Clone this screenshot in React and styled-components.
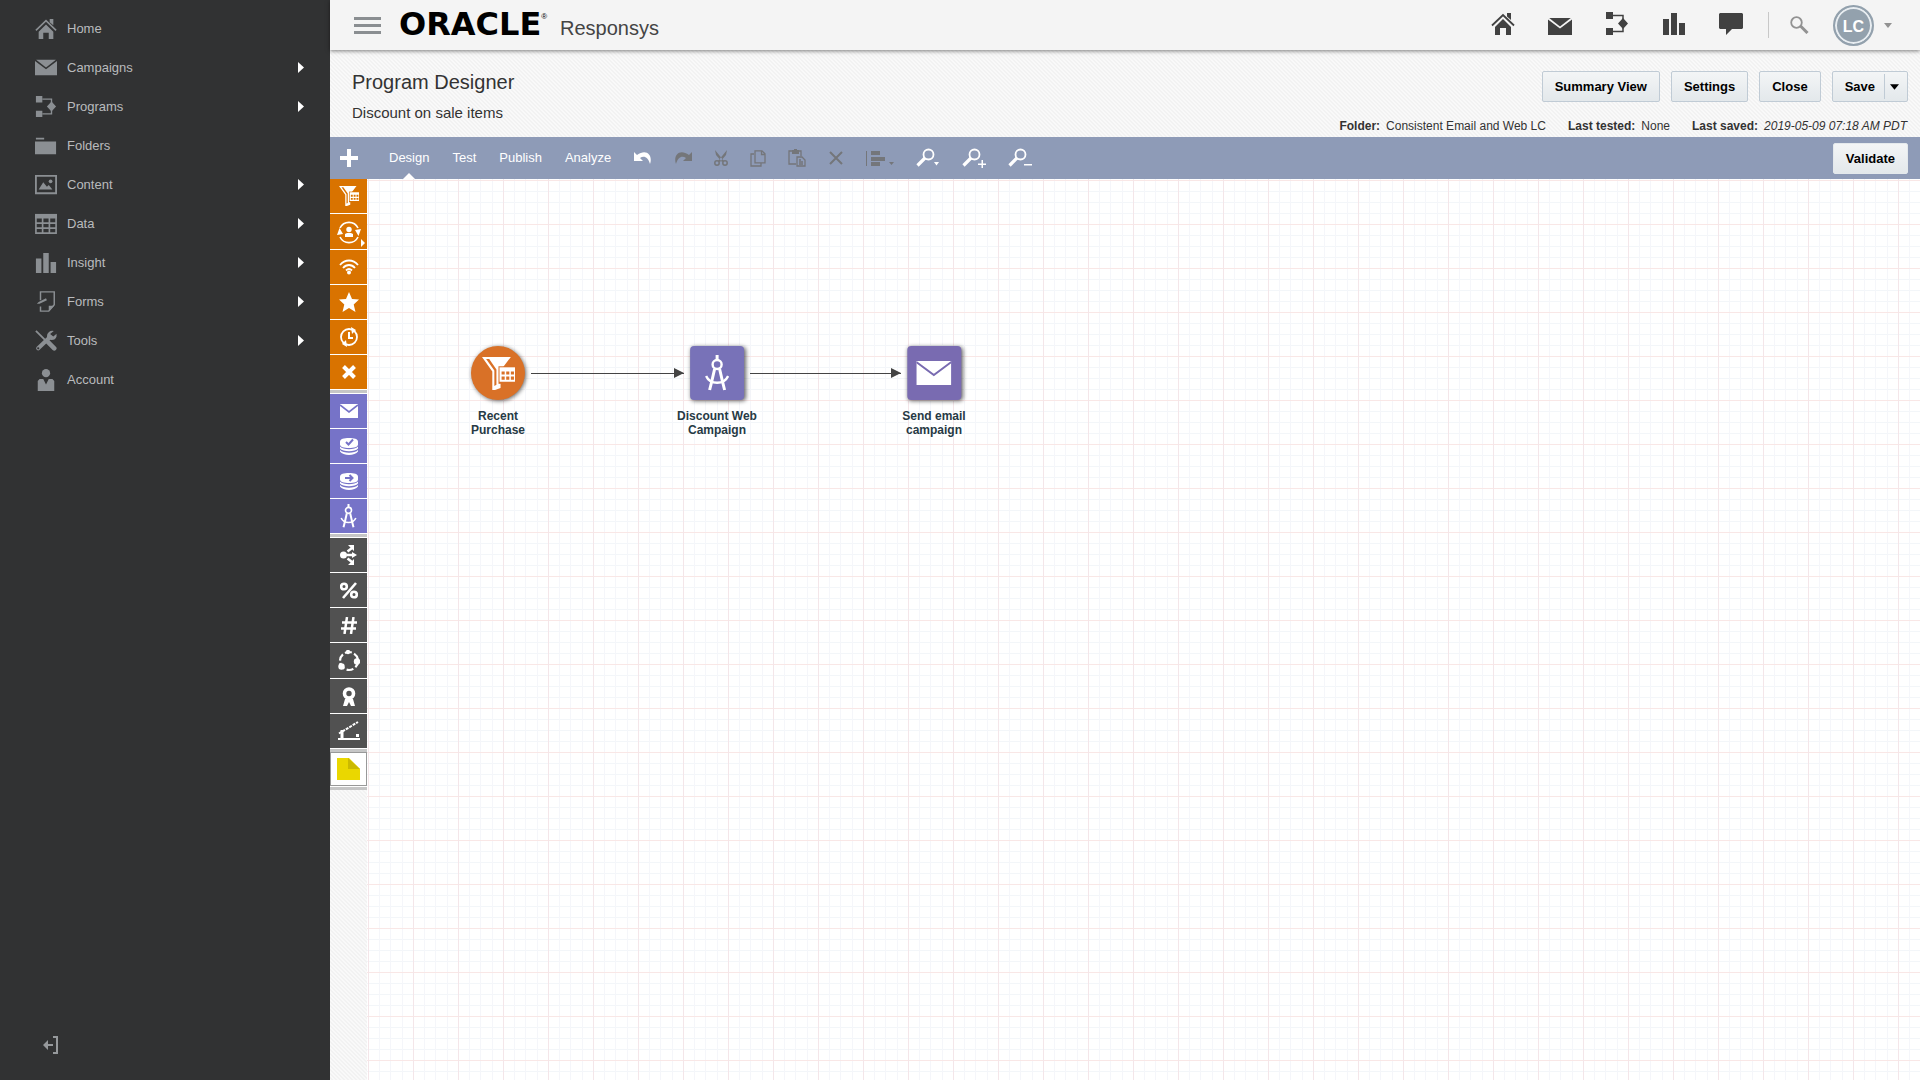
import styled, { createGlobalStyle, css } from "styled-components";

const GlobalStyle = createGlobalStyle`
  * { box-sizing: border-box; }
  body {
    margin: 0;
    font-family: "Liberation Sans", Arial, sans-serif;
    font-size: 13px;
    color: #333;
  }
  button { font: inherit; color: inherit; border: 0; padding: 0; background: none; cursor: pointer; }
  a { color: inherit; text-decoration: none; }
  h1, h2, p, ul { margin: 0; padding: 0; font-weight: normal; }
  ul { list-style: none; }
  svg { display: block; flex: none; }
`;

const hatch = css`
  background: linear-gradient(45deg, #f2f2f2 25%, #f9f9f9 25% 50%, #f2f2f2 50% 75%, #f9f9f9 75%) 0 0 / 4px 4px;
`;

// icons
const Icon = ({ w, h, children }) => (
  <svg width={w} height={h} viewBox={`0 0 ${w} ${h}`} fill="currentColor" aria-hidden="true">
    {children}
  </svg>
);

const HomeIcon = () => (
  <Icon w={24} h={22}>
    <path d="M12 6 4 14v8h5v-7h6v7h5v-8z" />
    <path d="M1 12.5 12 2l11 10.5" fill="none" stroke="currentColor" strokeWidth="1.8" />
    <path d="M16 0h4v7l-4-3.5z" />
  </Icon>
);

const MailIcon = () => (
  <Icon w={24} h={17}>
    <path d="M0 1.500V17h24V1.500L12 10.500z" />
    <path d="M1.200 0h21.600L12 8.600z" />
  </Icon>
);

const ProgramIcon = () => (
  <Icon w={24} h={23}>
    <path d="M1 0h7v7H1zM1 16h7v7H1zM18 6l5 5.5-5 5.5-5-5.5z" />
    <path d="M8 3.5h10v16H8" fill="none" stroke="currentColor" strokeWidth="1.5" />
  </Icon>
);

const BarsIcon = () => (
  <Icon w={24} h={22}>
    <path d="M1 6h6v16H1zM9 0h6v22H9zM17 10h6v12h-6z" />
  </Icon>
);

const ChatIcon = () => (
  <Icon w={24} h={22}>
    <path d="M1 0h22l1 1v14l-1 1H13l-6 6v-6H1l-1-1V1z" />
  </Icon>
);

const FolderIcon = () => (
  <Icon w={24} h={18}>
    <path d="M1 0h9v2H1zM0 4h23v14H0z" />
  </Icon>
);

const PictureIcon = () => (
  <Icon w={24} h={21}>
    <path d="M1 1h22v19H1z" fill="none" stroke="currentColor" strokeWidth="2" />
    <path d="M4 16 9 8l4 5 2-2 4 5z" />
    <circle cx="17" cy="7" r="2" />
  </Icon>
);

const TableIcon = () => (
  <Icon w={24} h={22}>
    <path d="M0 0h24v5H0z" />
    <path d="M1 4v17h22V4M1 10h22M1 15.500h22M8.300 4v17M15.700 4v17" fill="none" stroke="currentColor" strokeWidth="1.8" />
  </Icon>
);

const FormIcon = () => (
  <Icon w={24} h={23}>
    <path d="M6 10V1h15v14l-6 7H6v-5" fill="none" stroke="currentColor" strokeWidth="1.6" />
    <path d="M15 22v-6h6zM2 14l2-2 8-4 1 2-8 4z" />
  </Icon>
);

const ToolsIcon = () => (
  <Icon w={24} h={23}>
    <path d="M1 1 12 12" fill="none" stroke="currentColor" strokeWidth="2" />
    <path d="m14 13 7 7" fill="none" stroke="currentColor" strokeWidth="5" strokeLinecap="round" />
    <path d="M3.500 20 15 9" fill="none" stroke="currentColor" strokeWidth="4.500" strokeLinecap="round" />
    <path d="M20.500 1a6 6 0 0 0-7.500 6 5.500 5.500 0 0 0 10.500 0V4l-3.500 3-3.500-2.500z" />
    <circle cx="3.500" cy="20" r="1.200" fill="#313233" />
  </Icon>
);

const PersonIcon = () => (
  <Icon w={24} h={24}>
    <circle cx="12" cy="4.500" r="4.500" />
    <path d="M5 11h4l3 6 3-6h4l2 2v11H3V13z" />
  </Icon>
);

const ExitIcon = () => (
  <Icon w={16} h={18}>
    <path d="M10 1h4v16h-4" fill="none" stroke="currentColor" strokeWidth="2" />
    <path d="M0 9l5-5v4h5v2H5v4z" />
  </Icon>
);

const MenuIcon = () => (
  <Icon w={27} h={17}>
    <path d="M0 0h27v3H0zM0 7h27v3H0zM0 14h27v3H0z" />
  </Icon>
);

const SearchIcon = () => (
  <Icon w={19} h={18}>
    <circle cx="6.500" cy="6.500" r="5.300" fill="none" stroke="currentColor" strokeWidth="1.800" />
    <path d="m10.500 10 7 7" stroke="currentColor" strokeWidth="3" />
  </Icon>
);

const CaretDown = ({ w = 8, h = 5 }) => (
  <svg width={w} height={h} viewBox="0 0 8 5" fill="currentColor" aria-hidden="true">
    <path d="M0 0h8L4 5z" />
  </svg>
);

const CaretRight = () => (
  <Icon w={6} h={11}>
    <path d="M0 0l6 5.500L0 11z" />
  </Icon>
);

const PlusIcon = () => (
  <Icon w={18} h={18}>
    <path d="M7 0h4v7h7v4h-7v7H7v-7H0V7h7z" />
  </Icon>
);

const UndoIcon = () => (
  <Icon w={18} h={14}>
    <path d="M0 1v9h9L6 7c4-2.500 8-1 10 6 3-8-3-16-13-9z" />
  </Icon>
);

const RedoIcon = () => (
  <Icon w={18} h={14}>
    <path d="M18 1v9H9l3-3c-4-2.500-8-1-10 6-3-8 3-16 13-9z" />
  </Icon>
);

const CutIcon = () => (
  <Icon w={14} h={16}>
    <path d="m1 0 1 5 6 7 2-1zM13 0l-1 5-6 7-2-1z" />
    <circle cx="3" cy="13" r="2.200" fill="none" stroke="currentColor" strokeWidth="1.500" />
    <circle cx="11" cy="13" r="2.200" fill="none" stroke="currentColor" strokeWidth="1.500" />
  </Icon>
);

const CopyIcon = () => (
  <Icon w={16} h={17}>
    <path d="M5 .8h7l3 3v9H5zM11.500 1v3.500H15M4 4H1v12h10v-3" fill="none" stroke="currentColor" strokeWidth="1.300" />
  </Icon>
);

const PasteIcon = () => (
  <Icon w={18} h={18}>
    <path d="M8 15H1V2h12v5" fill="none" stroke="currentColor" strokeWidth="1.300" />
    <path d="M4 1h2V0h3v1h2v4H4z" />
    <path d="M9 8h5l3 3v6H9zM11 11h2M11 13h4M11 15h4" fill="none" stroke="currentColor" strokeWidth="1.300" />
  </Icon>
);

const DeleteIcon = () => (
  <Icon w={16} h={14}>
    <path d="m2 1 12 12M14 1 2 13" stroke="currentColor" strokeWidth="2" />
  </Icon>
);

const AlignIcon = () => (
  <Icon w={28} h={15}>
    <path d="M0 0h1v15H0zM5 0h9v4H5zM5 6h14v4H5zM5 11h9v4H5zM23 11h5l-2.500 3z" />
  </Icon>
);

const ZoomIcon = ({ mark }) => (
  <Icon w={24} h={20}>
    <circle cx="12.500" cy="6.500" r="5" fill="none" stroke="currentColor" strokeWidth="1.800" />
    <path d="M9 10 1.500 17.500" stroke="currentColor" strokeWidth="3.200" />
    <path d={mark} />
  </Icon>
);

const FunnelIcon = ({ size = 20, cut = "#d97300" }) => (
  <svg width={size} height={size} viewBox="0 0 32 32" fill="currentColor" aria-hidden="true">
    <path d="M0 0h28L18 13v17l-8 3V14z" />
    <path d="M4 2 12 13v15l2-1V12L7 2z" fill={cut} />
    <path d="M16 9h17v17H16z" fill={cut} />
    <path d="M17 10h15v14H17z" />
    <path d="M19 14h3v3h-3zM23.500 14h3v3h-3zM28 14h3v3h-3zM19 19h3v3h-3zM23.500 19h3v3h-3zM28 19h3v3h-3z" fill={cut} />
  </svg>
);

const CompassIcon = ({ w = 18, h = 24 }) => (
  <svg width={w} height={h} viewBox="0 0 24 36" fill="none" stroke="currentColor" strokeWidth="2.400" aria-hidden="true">
    <path d="M12 0v5" strokeWidth="3" />
    <circle cx="12" cy="9.500" r="4.500" />
    <path d="M9.500 14 6.500 27 4.500 35M14.500 14l3 13 2 8" strokeWidth="3" />
    <path d="M1 21c4 9 18 9 22 0" />
  </svg>
);

const AudienceIcon = () => (
  <Icon w={24} h={24}>
    <path d="M3 8a10 10 0 0 1 18 0M21 17a10 10 0 0 1-18 0" fill="none" stroke="currentColor" strokeWidth="1.600" />
    <path d="m0 15 2.500-7L6 14zM24 9l-2.500 7L18 10zM8 17v-3l2-1h4l2 1v3z" />
    <circle cx="12" cy="9.500" r="2.700" />
  </Icon>
);

const SignalIcon = () => (
  <Icon w={20} h={16}>
    <path d="M1 6c5-6 13-6 18 0M4 9c3.500-4 8.500-4 12 0M7 11.500c2-2 4-2 6 0" fill="none" stroke="currentColor" strokeWidth="1.800" />
    <circle cx="10" cy="13.500" r="2" />
  </Icon>
);

const StarIcon = () => (
  <Icon w={20} h={20}>
    <path d="m10 0 3 7 7 .6-5.300 4.800L16.500 20 10 16l-6.500 4 1.800-7.600L0 7.600 7 7z" />
  </Icon>
);

const TimerIcon = () => (
  <Icon w={20} h={20}>
    <circle cx="10" cy="10" r="8" fill="none" stroke="currentColor" strokeWidth="1.800" />
    <path d="m12 0 5 3-4 4zM8 20l-5-3 4-4zM9 5h2v5h3v2H9z" />
  </Icon>
);

const CrossIcon = () => (
  <Icon w={16} h={14}>
    <path d="m2.500 1.500 11 11M13.500 1.500l-11 11" stroke="currentColor" strokeWidth="4" />
  </Icon>
);

const DataIcon = ({ mark }) => (
  <Icon w={18} h={17}>
    <path d="M0 3.500C0 1 4 0 9 0s9 1 9 3.500v3C18 9 14 10 9 10S0 9 0 6.500z" />
    <path d="M0 8.500c3 3.500 15 3.500 18 0v2c-3 3.500-15 3.500-18 0zM0 12c3 3.500 15 3.500 18 0v1.500c-3 4.500-15 4.500-18 0z" />
    <path d={mark} fill="none" stroke="#7673c8" strokeWidth="2" />
  </Icon>
);

const SplitIcon = () => (
  <Icon w={18} h={20}>
    <circle cx="3.500" cy="10" r="3.500" />
    <path d="M7 10h6M7.500 6.500 12 3M7.500 13.500 12 17" stroke="currentColor" strokeWidth="2.400" />
    <path d="m12 7 5 3-5 3zM8 0h6v6zM8 20h6v-6z" />
  </Icon>
);

const PercentIcon = () => (
  <Icon w={18} h={17}>
    <circle cx="4" cy="4.500" r="2.800" fill="none" stroke="currentColor" strokeWidth="2.600" />
    <circle cx="14" cy="12.500" r="2.800" fill="none" stroke="currentColor" strokeWidth="2.600" />
    <path d="M16 1 3 16" stroke="currentColor" strokeWidth="2.600" />
  </Icon>
);

const HashIcon = () => (
  <Icon w={16} h={17}>
    <path d="M6 0 3.500 17M12.500 0 10 17M1 5.500h15M0 11.500h15" stroke="currentColor" strokeWidth="2.500" />
  </Icon>
);

const CycleIcon = () => (
  <Icon w={22} h={22}>
    <circle cx="11" cy="11" r="9" fill="none" stroke="currentColor" strokeWidth="2.200" strokeDasharray="7 2.500" />
    <circle cx="10" cy="2" r="2.200" />
    <circle cx="19" cy="11.500" r="3.200" />
    <circle cx="3.500" cy="16.500" r="3.200" />
  </Icon>
);

const AwardIcon = () => (
  <Icon w={14} h={19}>
    <circle cx="7" cy="6.500" r="4.500" fill="none" stroke="currentColor" strokeWidth="3.600" />
    <path d="M3 12h8l2 7H9l-2-4-2 4H1z" />
  </Icon>
);

const GateIcon = () => (
  <Icon w={22} h={20}>
    <path d="M0 17h22v2H0zM2.500 9h3v8h-3zM18 13h3v3h-3z" />
    <path d="M1 12.500 20 1" fill="none" stroke="currentColor" strokeWidth="2" strokeDasharray="3 1" />
  </Icon>
);

const NoteIcon = () => (
  <Icon w={23} h={22}>
    <path d="M0 0h12l11 11v11H0z" fill="#ead700" />
    <path d="M11 0v11h12z" fill="#cbb900" />
  </Icon>
);

const SmallMail = () => (
  <Icon w={18} h={14}>
    <path d="M0 0h18v14H0z" />
    <path d="m0 1 9 7 9-7" fill="none" stroke="#7673c8" strokeWidth="1.600" />
  </Icon>
);

const BigMail = () => (
  <Icon w={35} h={24}>
    <path d="M0 0h35v24H0z" />
    <path d="m0 1 17.500 13L35 1" fill="none" stroke="#796bb1" strokeWidth="2" />
  </Icon>
);

// data
const menu = [
  { label: "Home", icon: <HomeIcon /> },
  { label: "Campaigns", icon: <MailIcon />, more: true },
  { label: "Programs", icon: <ProgramIcon />, more: true },
  { label: "Folders", icon: <FolderIcon /> },
  { label: "Content", icon: <PictureIcon />, more: true },
  { label: "Data", icon: <TableIcon />, more: true },
  { label: "Insight", icon: <BarsIcon />, more: true },
  { label: "Forms", icon: <FormIcon />, more: true },
  { label: "Tools", icon: <ToolsIcon />, more: true },
  { label: "Account", icon: <PersonIcon /> },
];

const shortcuts = [
  { label: "Home", icon: <HomeIcon /> },
  { label: "Campaigns", icon: <MailIcon /> },
  { label: "Programs", icon: <ProgramIcon /> },
  { label: "Insight", icon: <BarsIcon /> },
  { label: "Messages", icon: <ChatIcon /> },
];

const tabs = ["Design", "Test", "Publish", "Analyze"];

const tools = [
  { label: "Undo", icon: <UndoIcon /> },
  { label: "Redo", icon: <RedoIcon />, off: true },
  { label: "Cut", icon: <CutIcon />, off: true },
  { label: "Copy", icon: <CopyIcon />, off: true },
  { label: "Paste", icon: <PasteIcon />, off: true },
  { label: "Delete", icon: <DeleteIcon />, off: true },
  { label: "Align", icon: <AlignIcon />, off: true },
  { label: "Zoom", icon: <ZoomIcon mark="M18 14h5l-2.500 3.500z" /> },
  { label: "Zoom in", icon: <ZoomIcon mark="M19.500 12h1.500v3.500h3V17h-3v3h-1.500v-3H16v-1.500h3.500z" /> },
  { label: "Zoom out", icon: <ZoomIcon mark="M16 16h8v1.500h-8z" /> },
];

const palette = [
  {
    color: "#d97300",
    items: [
      { label: "Scheduled filter", icon: <FunnelIcon /> },
      { label: "Audience", icon: <AudienceIcon />, more: true, tall: true },
      { label: "Signal", icon: <SignalIcon /> },
      { label: "Custom event", icon: <StarIcon /> },
      { label: "Timer", icon: <TimerIcon /> },
      { label: "End", icon: <CrossIcon /> },
    ],
  },
  {
    color: "#7673c8",
    items: [
      { label: "Email", icon: <SmallMail /> },
      { label: "Check data", icon: <DataIcon mark="m6 4 2.500 2.500L13 1.500" /> },
      { label: "Send data", icon: <DataIcon mark="M5 5h7M9.500 2l3 3-3 3" /> },
      { label: "Web campaign", icon: <CompassIcon w={17} h={24} /> },
    ],
  },
  {
    color: "#515151",
    items: [
      { label: "Data switch", icon: <SplitIcon /> },
      { label: "Percent switch", icon: <PercentIcon /> },
      { label: "Number switch", icon: <HashIcon /> },
      { label: "Cycle", icon: <CycleIcon />, tall: true },
      { label: "Goal", icon: <AwardIcon /> },
      { label: "Gate", icon: <GateIcon /> },
    ],
  },
  { color: "#fff", note: true, items: [{ label: "Note", icon: <NoteIcon /> }] },
];

const nodes = [
  { x: 131, lines: ["Recent", "Purchase"], round: true, color: "#d97127", icon: <FunnelIcon size={33} cut="#d97127" /> },
  { x: 350, lines: ["Discount Web", "Campaign"], color: "#7872b8", icon: <CompassIcon w={24} h={36} /> },
  { x: 567, lines: ["Send email", "campaign"], color: "#796bb1", icon: <BigMail /> },
];

const links = [
  { x: 164, length: 153 },
  { x: 383, length: 151 },
];

export default function App() {
  return (
    <Page>
      <GlobalStyle />
      <Sidebar>
        <ul>
          {menu.map((item) => (
            <li key={item.label}>
              <MenuLink href="#">
                <MenuIconBox>{item.icon}</MenuIconBox>
                <span>{item.label}</span>
                {item.more && <Arrow><CaretRight /></Arrow>}
              </MenuLink>
            </li>
          ))}
        </ul>
        <ExitButton aria-label="Collapse menu"><ExitIcon /></ExitButton>
      </Sidebar>

      <Main>
        <TopBar>
          <MenuButton aria-label="Menu"><MenuIcon /></MenuButton>
          <Brand>
            <Logo>ORACLE<sup>®</sup></Logo>
            <Product>Responsys</Product>
          </Brand>
          <Shortcuts>
            {shortcuts.map((item) => (
              <a href="#" key={item.label} aria-label={item.label}>{item.icon}</a>
            ))}
          </Shortcuts>
          <Divider />
          <SearchButton aria-label="Search"><SearchIcon /></SearchButton>
          <UserButton>
            <Avatar>LC</Avatar>
            <CaretDown />
          </UserButton>
        </TopBar>

        <Header>
          <div>
            <Title>Program Designer</Title>
            <Subtitle>Discount on sale items</Subtitle>
          </div>
          <HeaderSide>
            <Actions>
              <Button>Summary View</Button>
              <Button>Settings</Button>
              <Button>Close</Button>
              <SplitButton>
                <button>Save</button>
                <button aria-label="More save options"><CaretDown w={9} h={6} /></button>
              </SplitButton>
            </Actions>
            <Meta>
              <p><b>Folder:</b><span>Consistent Email and Web LC</span></p>
              <p><b>Last tested:</b><span>None</span></p>
              <p><b>Last saved:</b><em>2019-05-09 07:18 AM PDT</em></p>
            </Meta>
          </HeaderSide>
        </Header>

        <Toolbar>
          <AddButton aria-label="Add"><PlusIcon /></AddButton>
          <Tabs>
            {tabs.map((tab, index) => (
              <Tab key={tab} $active={index === 0}>{tab}</Tab>
            ))}
          </Tabs>
          <Tools>
            {tools.map((tool) => (
              <Tool key={tool.label} aria-label={tool.label} disabled={tool.off}>{tool.icon}</Tool>
            ))}
          </Tools>
          <Button $plain>Validate</Button>
        </Toolbar>

        <Workspace>
          <Palette>
            {palette.map((group) => (
              <Group key={group.color} $note={group.note}>
                {group.items.map((item) => (
                  <Tile
                    key={item.label}
                    aria-label={item.label}
                    $color={group.color}
                    $note={group.note}
                    $tall={item.tall}
                  >
                    {item.icon}
                    {item.more && <Corner />}
                  </Tile>
                ))}
              </Group>
            ))}
          </Palette>
          <Canvas>
            {links.map((link) => (
              <Connector key={link.x} $x={link.x} $length={link.length} />
            ))}
            {nodes.map((node) => (
              <Node key={node.x} $x={node.x}>
                <Shape $round={node.round} $color={node.color}>{node.icon}</Shape>
                <NodeLabel>{node.lines[0]}<br />{node.lines[1]}</NodeLabel>
              </Node>
            ))}
          </Canvas>
        </Workspace>
      </Main>
    </Page>
  );
}

const Page = styled.div`
  display: flex;
  min-height: 100vh;
`;

const Sidebar = styled.nav`
  display: flex;
  flex-direction: column;
  justify-content: space-between;
  flex: 0 0 330px;
  padding: 9px 26px 26px 35px;
  background: #313233;
  color: #b9bbbd;
`;

const MenuLink = styled.a`
  display: flex;
  align-items: center;
  height: 39px;
`;

const MenuIconBox = styled.span`
  width: 32px;
  color: #8b8f93;
  svg { width: 22px; }
`;

const Arrow = styled.span`
  margin-left: auto;
  color: #fff;
`;

const ExitButton = styled.button`
  align-self: flex-start;
  margin-left: 8px;
  color: #96999c;
`;

const Main = styled.main`
  display: flex;
  flex-direction: column;
  flex: 1;
  min-width: 0;
`;

const TopBar = styled.header`
  display: flex;
  align-items: center;
  height: 50px;
  padding: 0 28px 0 24px;
  background: #f4f4f4;
  box-shadow: 0 1px 4px rgba(0, 0, 0, 0.5);
  z-index: 1;
`;

const MenuButton = styled.button`
  color: #8a8e91;
`;

const Brand = styled.div`
  display: flex;
  align-items: baseline;
  margin-left: 18px;
  padding-bottom: 2px;
`;

const Logo = styled.span`
  display: flex;
  width: 161px;
  font: bold 32px/36px "DejaVu Sans", sans-serif;
  color: #000;
  sup { font: 8px/22px "Liberation Sans", sans-serif; }
`;

const Product = styled.span`
  font-size: 20px;
  color: #444;
`;

const Shortcuts = styled.nav`
  display: flex;
  align-items: flex-end;
  gap: 33px;
  margin-left: auto;
  padding-bottom: 3px;
  color: #414141;
`;

const Divider = styled.span`
  width: 1px;
  height: 26px;
  margin: 0 21px 0 25px;
  background: #c8c8c8;
`;

const SearchButton = styled.button`
  color: #929292;
`;

const UserButton = styled.button`
  display: flex;
  align-items: center;
  gap: 10px;
  margin-left: 24px;
  color: #929292;
`;

const Avatar = styled.span`
  width: 41px;
  height: 41px;
  border: 2px solid #93a1ad;
  border-radius: 50%;
  background: #93a1ad;
  box-shadow: inset 0 0 0 2px #e8edf1;
  color: #fff;
  font: bold 16px/39px "Liberation Sans", sans-serif;
  text-align: center;
`;

const Header = styled.section`
  display: flex;
  justify-content: space-between;
  min-height: 87px;
  padding: 20px 12px 4px 22px;
  ${hatch}
`;

const Title = styled.h1`
  font-size: 20px;
  line-height: 24px;
`;

const Subtitle = styled.h2`
  margin-top: 10px;
  font-size: 15px;
  line-height: 18px;
`;

const HeaderSide = styled.div`
  align-self: flex-end;
`;

const Actions = styled.div`
  display: flex;
  justify-content: flex-end;
  gap: 11px;
`;

const face = css`
  border: 1px solid #c0cbd5;
  border-radius: 2px;
  background: linear-gradient(#f3f5f6, #e3e8eb);
  font-weight: bold;
  color: #000;
`;

const Button = styled.button`
  ${face}
  height: 31px;
  padding: 0 12px;
  ${({ $plain }) => $plain && css`
    border-color: #e4e9ec;
  `}
`;

const SplitButton = styled.div`
  ${face}
  display: flex;
  align-items: center;
  height: 31px;
  button { padding: 0 9px 0 12px; height: 25px; }
  button + button { padding: 0 8px 0 5px; border-left: 1px solid #c0cbd5; }
`;

const Meta = styled.div`
  display: flex;
  justify-content: flex-end;
  gap: 22px;
  margin-top: 17px;
  padding-right: 1px;
  font-size: 12px;
  line-height: 14px;
  b { margin-right: 6px; }
`;

const Toolbar = styled.div`
  display: flex;
  align-items: center;
  height: 42px;
  padding: 0 12px 0 10px;
  background: #8e9bb7;
  color: #fff;
`;

const AddButton = styled.button`
  margin-right: 31px;
`;

const Tabs = styled.div`
  display: flex;
  align-self: stretch;
  gap: 23px;
`;

const Tab = styled.button`
  position: relative;
  padding-bottom: 2px;
  ${({ $active }) => $active && css`
    &::after {
      content: "";
      position: absolute;
      bottom: 0;
      left: 50%;
      margin-left: -6px;
      border: 6px solid transparent;
      border-top: 0;
      border-bottom-color: #fff;
    }
  `}
`;

const Tools = styled.div`
  display: flex;
  align-items: center;
  gap: 22px;
  margin: 0 auto 0 23px;
`;

const Tool = styled.button`
  color: #fff;
  &:disabled { color: #74767a; }
`;

const Workspace = styled.div`
  display: flex;
  flex: 1;
`;

const Palette = styled.div`
  flex: 0 0 37px;
  ${hatch}
`;

const Group = styled.div`
  display: grid;
  gap: 1px;
  padding: ${({ $note }) => ($note ? 0 : 1)}px 0 1px;
  border-bottom: 3px solid #c6c6c6;
  background: #fff;
  &:first-child { padding-top: 0; }
`;

const Tile = styled.button`
  position: relative;
  display: grid;
  place-items: center;
  height: ${({ $tall }) => ($tall ? 35 : 34)}px;
  background: ${({ $color }) => $color};
  color: #fff;
  ${({ $note }) => $note && "border: 1px solid #999;"}
`;

const Corner = styled.i`
  position: absolute;
  right: 2px;
  bottom: 2px;
  border: 4px solid transparent;
  border-left-color: #fff;
  border-right: 0;
`;

const Canvas = styled.div`
  position: relative;
  flex: 1;
  background:
    linear-gradient(to right, #f4e6e9 1px, transparent 1px) 1px 0 / 45px 44px,
    linear-gradient(to bottom, #f9e7e6 1px, transparent 1px) 0 1px / 45px 44px,
    linear-gradient(to right, transparent 11px, #f5f6fa 11px 12px, transparent 12px 22px, #f5f6fa 22px 23px, transparent 23px 34px, #f5f6fa 34px 35px, transparent 35px) 1px 0 / 45px 44px,
    linear-gradient(to bottom, transparent 11px, #f3f6f9 11px 12px, transparent 12px 22px, #f3f6f9 22px 23px, transparent 23px 33px, #f3f6f9 33px 34px, transparent 34px) 0 1px / 45px 44px,
    #fff;
`;

const Node = styled.div`
  position: absolute;
  top: 167px;
  left: ${({ $x }) => $x}px;
  display: flex;
  flex-direction: column;
  align-items: center;
  gap: 9px;
  transform: translateX(-50%);
`;

const Shape = styled.div`
  display: grid;
  place-items: center;
  width: 54px;
  height: 54px;
  border-radius: ${({ $round }) => ($round ? "50%" : "4px")};
  background: ${({ $color }) => $color};
  box-shadow: 1px 1px 4px rgba(0, 0, 0, 0.6);
  color: #fff;
`;

const NodeLabel = styled.p`
  font-size: 12px;
  font-weight: bold;
  line-height: 14px;
  text-align: center;
  white-space: nowrap;
  color: #273a45;
`;

const Connector = styled.div`
  position: absolute;
  top: 194px;
  left: ${({ $x }) => $x}px;
  width: ${({ $length }) => $length}px;
  height: 1px;
  background: #444;
  &::after {
    content: "";
    position: absolute;
    top: -5px;
    right: 0;
    border: 5px solid transparent;
    border-left: 10px solid #444;
    border-right: 0;
  }
`;
